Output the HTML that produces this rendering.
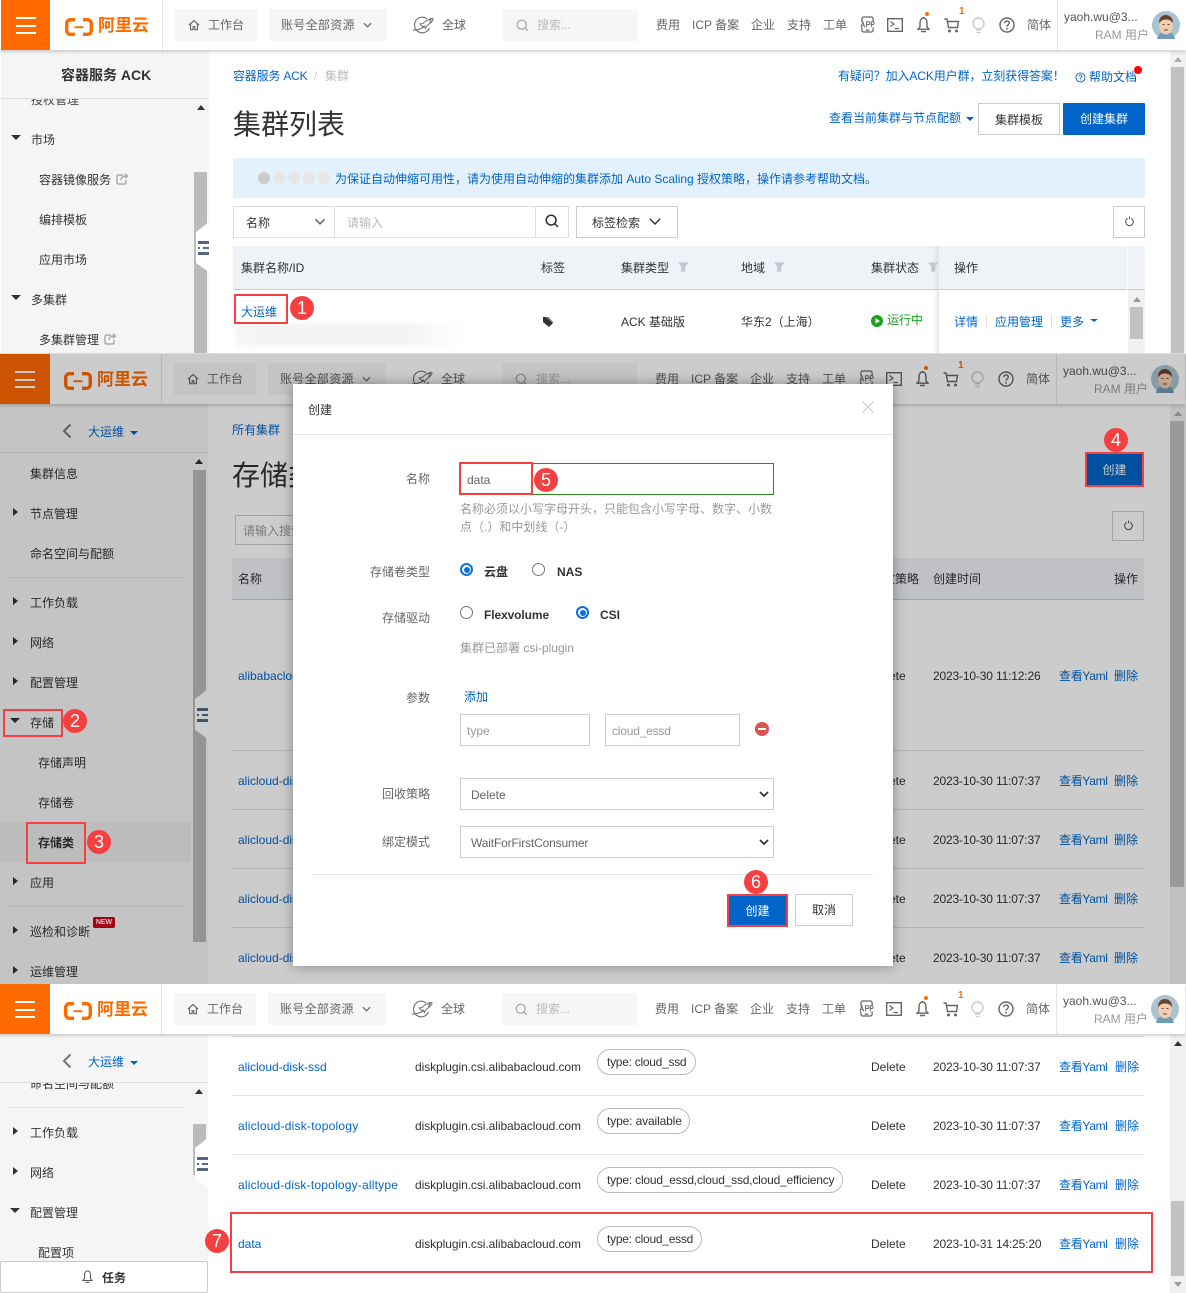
<!DOCTYPE html>
<html lang="zh-CN"><head><meta charset="utf-8"><title>容器服务 ACK</title>
<style>
*{box-sizing:border-box}
html,body{margin:0;padding:0;background:#fff}
body{position:relative;width:1186px;height:1293px;overflow:hidden;font-family:"Liberation Sans","Noto Sans CJK SC",sans-serif;font-size:12px;color:#333}
.p{position:absolute;left:0;width:1186px;overflow:hidden;background:#fff}
.w{position:absolute;left:0;width:1186px;height:1293px}
.t{position:absolute;white-space:nowrap;line-height:16px;font-size:12px}
.bl{color:#0064c8}.g{color:#666}.d{color:#999}
.r{position:absolute;display:block}
svg{position:absolute;display:block;overflow:visible}
.h{position:absolute;left:0;width:1186px;height:50px;background:#fff;box-shadow:0 1px 4px rgba(0,0,0,.25);z-index:5}
.h .t{top:17px;color:#666}
.h2{left:-1px}
.o{position:absolute;left:1px;top:0;width:49px;height:50px;background:#ff6a00}
.h2 .o{width:50px}
.o i{position:absolute;left:15px;width:20px;height:2px;background:#fff}
.box{position:absolute;top:9px;height:32px;background:#f5f6f7}
.sb{position:absolute;background:#f5f5f5}
.hl{position:absolute;height:1px;background:#e3e3e3}
.th{position:absolute;background:#eff2f6;border-bottom:1px solid #ccc}
.bd{position:absolute;border:1px solid #ccc;background:#fff}
.btn{position:absolute;text-align:center;line-height:32px;font-size:12px}
.ann{position:absolute;border:2px solid #f44040;z-index:20}
.b{position:absolute;width:24px;height:24px;border-radius:50%;background:#f44040;color:#fff;font-size:18px;line-height:24px;text-align:center;z-index:21}
.pill{position:absolute;height:26px;border:1px solid #bbb;border-radius:13px;padding-left:9px;line-height:25px;font-size:12px;white-space:nowrap;color:#333}
.rad{position:absolute;width:13px;height:13px;border-radius:50%;border:1px solid #777;background:#fff}
.rad.on{border:2px solid #0a6fe0;}
.rad.on:after{content:"";position:absolute;left:1.5px;top:1.5px;width:6px;height:6px;border-radius:50%;background:#0a6fe0}
.tri{position:absolute;width:0;height:0}
.tr{border-left:5px solid #333;border-top:4.5px solid transparent;border-bottom:4.5px solid transparent}
.td{border-top:5px solid #333;border-left:5px solid transparent;border-right:5px solid transparent}
.tu{border-bottom:5px solid #555;border-left:4px solid transparent;border-right:4px solid transparent}
.tdb{border-top:4px solid #0064c8;border-left:4px solid transparent;border-right:4px solid transparent}
.sc{position:absolute;background:#f1f1f1}
.th2{position:absolute;background:#c1c1c1}
.tm{letter-spacing:-.16px}.ya{letter-spacing:-.3px}.dp{letter-spacing:-.07px}
.res{letter-spacing:.3px}
.lo{font-size:17px!important;line-height:20px!important;font-weight:700;color:#ff6a00!important;top:16px!important}
.one{color:#ff6a00!important;font-size:10px!important;font-weight:700;top:4px!important}
</style></head><body>
<svg width="0" height="0" style="position:absolute">
<defs>
<symbol id="home" viewBox="0 0 14 14"><path d="M1 7.2 7 1.8l6 5.4M3 6v6.500h3V9h2v3.500h3V6" fill="none" stroke="#666" stroke-width="1.300"/></symbol>
<symbol id="globe" viewBox="0 0 22 20"><path d="M15 3.800A7.800 7.800 0 1 0 17.500 13" fill="none" stroke="#777" stroke-width="1.200"/><path d="M.8 15C6 15.500 13 12 17 9c3-2.200 4.500-4.500 3.800-5.200-.7-.6-3 .2-5 1.600" fill="none" stroke="#777" stroke-width="1.200"/><path d="M8 9l3-.5 3.500-3 4.500-1-1.500 4-3 2.500-1 2.500-1-2.500-2 .5z" fill="#fff" stroke="#777" stroke-width="1"/></symbol>
<symbol id="srch" viewBox="0 0 16 16"><circle cx="7" cy="7" r="5.600" fill="none" stroke="#999" stroke-width="1.300"/><path d="M11 11l3.500 3.500" stroke="#999" stroke-width="1.300"/></symbol>
<symbol id="srchd" viewBox="0 0 16 16"><circle cx="7" cy="7" r="5.600" fill="none" stroke="#333" stroke-width="1.800"/><path d="M11 11l3.800 3.800" stroke="#333" stroke-width="1.800"/></symbol>
<symbol id="app" viewBox="0 0 16 18"><path d="M2 6V3a2 2 0 0 1 2-2h8a2 2 0 0 1 2 2v3M2 12v3a2 2 0 0 0 2 2h8a2 2 0 0 0 2-2v-3M6 15h4" fill="none" stroke="#666" stroke-width="1.300"/><path d="M1 12 3 6l2 6M2 10h2M7 12V6h2a1.500 1.500 0 0 1 0 3H7M12 12V6h1.500a1.500 1.500 0 0 1 0 3H12" fill="none" stroke="#666" stroke-width="1"/></symbol>
<symbol id="term" viewBox="0 0 16 14"><rect x=".7" y=".7" width="14.600" height="12.600" fill="none" stroke="#666" stroke-width="1.400"/><path d="M3.500 3.500 7 6 3.500 8.500M7.500 10.500H12" fill="none" stroke="#666" stroke-width="1.200"/></symbol>
<symbol id="bell" viewBox="0 0 13 17"><path d="M6.500 2C4 2 3 4.500 3 7v4l-2 2.200h11L10 11V7c0-2.500-1-5-3.500-5zM6.500 1v1M4 15.500h5" fill="none" stroke="#666" stroke-width="1.400"/></symbol>
<symbol id="bella" viewBox="0 0 13 17"><path d="M6.500 2C4 2 3 4.500 3 7v4l-2 2.200h11L10 11V7c0-2.500-1-5-3.500-5zM4 15.500h5" fill="none" stroke="#555" stroke-width="1.200"/></symbol>
<symbol id="cart" viewBox="0 0 16 15"><path d="M.5 1h2.500l1.500 8.500h9l1-6H4" fill="none" stroke="#666" stroke-width="1.400"/><circle cx="5.500" cy="13" r="1.500" fill="#666"/><circle cx="12.500" cy="13" r="1.500" fill="#666"/></symbol>
<symbol id="bulb" viewBox="0 0 13 17"><circle cx="6.500" cy="6.500" r="5.500" fill="none" stroke="#ccc" stroke-width="1.400"/><path d="M4 13h5M4.500 15.500h4" stroke="#ccc" stroke-width="1.300"/></symbol>
<symbol id="help" viewBox="0 0 16 16"><circle cx="8" cy="8" r="7" fill="none" stroke="#666" stroke-width="1.400"/><path d="M5.800 6.200c0-3 4.500-3 4.500-.2 0 1.800-2.300 1.800-2.300 3.700" fill="none" stroke="#666" stroke-width="1.400"/><circle cx="8" cy="11.800" r=".9" fill="#666"/></symbol>
<symbol id="helpb" viewBox="0 0 12 12"><circle cx="6" cy="6" r="5" fill="none" stroke="#0064c8"/><path d="M4.500 4.700c0-2 3-2 3-.1C7.500 5.800 6 5.800 6 7.200M6 8.200v1" fill="none" stroke="#0064c8"/></symbol>
<symbol id="av" viewBox="0 0 28 28"><circle cx="14" cy="14" r="14" fill="#a9c3cf"/><path d="M5 28c1-6 5-7 9-7s8 1 9 7z" fill="#6f9db8"/><ellipse cx="14" cy="14.500" rx="6.800" ry="9" fill="#f3cdb0"/><path d="M7.200 12.500C6.500 6 11 3.500 14.500 4 18.800 4.500 21.500 8 20.800 12.500 19.500 9.500 17 8.500 14 8.500S9 9.500 7.200 12.500z" fill="#6a4230"/><path d="M10.500 13.500h2M15.500 13.500h2M12 19h4" stroke="#6a4230" stroke-width="1"/></symbol>
<symbol id="logo" viewBox="0 0 28 18"><path d="M10 1.700H5.500A3.800 3.800 0 0 0 1.700 5.500v7a3.800 3.800 0 0 0 3.800 3.800H10M18 1.700h4.500a3.800 3.800 0 0 1 3.800 3.800v7a3.800 3.800 0 0 1-3.800 3.800H18" fill="none" stroke="#ff6a00" stroke-width="3.400"/><path d="M9.500 9.200h9" stroke="#ff6a00" stroke-width="1.900"/></symbol>
<symbol id="chev" viewBox="0 0 10 6"><path d="M1 1l4 4 4-4" fill="none" stroke="#666" stroke-width="1.300"/></symbol>
<symbol id="chevd" viewBox="0 0 12 7"><path d="M.8.8 6 6l5.200-5.200" fill="none" stroke="#333" stroke-width="1.400"/></symbol>
<symbol id="filt" viewBox="0 0 12 10"><path d="M0 0h11.500L8 4.500V10H3.500V4.500z" fill="#c2c8cf"/></symbol>
<symbol id="ref" viewBox="0 0 12 12"><path d="M8 2.600A4.200 4.200 0 1 1 4 2.600M6 .5v3" fill="none" stroke="#555" stroke-width="1.100"/></symbol>
<symbol id="tag" viewBox="0 0 12 12"><path d="M1 1h5l5.500 5.500-4.500 4.500L1 6z" fill="#333"/><path d="M3 0l8.500 7" stroke="#fff" stroke-width=".5"/></symbol>
<symbol id="hand" viewBox="0 0 13 50"><path d="M13 0 0 10v31l13 9z" fill="#fff"/><path d="M2 19h11v3H2zM2 30h11v3H2zM7 25h6v2H7zM2 25h2v2H2z" fill="#566880"/></symbol>
<symbol id="back" viewBox="0 0 10 16"><path d="M8.500 1.500 2 8l6.500 6.500" fill="none" stroke="#777" stroke-width="2"/></symbol>
<symbol id="ext" viewBox="0 0 12 12"><path d="M7 2H2.500A1.500 1.500 0 0 0 1 3.500v6A1.500 1.500 0 0 0 2.500 11h6A1.500 1.500 0 0 0 10 9.500V7M5 7c0-3 2-4 6-4M9 .8 11.500 3 9 5.200" fill="none" stroke="#aaa" stroke-width="1.500"/></symbol>
<symbol id="play" viewBox="0 0 12 12"><circle cx="6" cy="6" r="6" fill="#1aa31a"/><path d="M4.500 3.300 9 6l-4.500 2.700z" fill="#fff"/></symbol>
</defs></svg>

<!-- PANEL 1 -->
<div class="p" style="top:0;height:354px"><div class="w" style="top:0">
<div class="h" style="top:0">
<div class="o"><i style="top:17px"></i><i style="top:25px"></i><i style="top:32px"></i></div>
<svg style="left:65px;top:18px" width="28" height="18"><use href="#logo"/></svg>
<span class="t lo" style="left:98px">阿里云</span>
<div class="r" style="left:162px;top:0;width:1px;height:50px;background:#e5e5e5"></div>
<div class="box" style="left:175px;width:82px"></div>
<svg style="left:188px;top:19px" width="12" height="12"><use href="#home"/></svg><span class="t" style="left:208px">工作台</span>
<div class="box" style="left:269px;width:118px"></div><span class="t res" style="left:281px">账号全部资源</span>
<svg style="left:363px;top:22px" width="9" height="6"><use href="#chev"/></svg>
<svg style="left:412px;top:15px" width="22" height="20"><use href="#globe"/></svg><span class="t" style="left:442px">全球</span>
<div class="box" style="left:503px;width:135px"></div>
<svg style="left:516px;top:19px" width="13" height="13"><use href="#srch"/></svg><span class="t" style="left:537px;color:#bbb">搜索...</span>
<span class="t" style="left:656px">费用</span><span class="t" style="left:692px">ICP 备案</span><span class="t" style="left:751px">企业</span><span class="t" style="left:787px">支持</span><span class="t" style="left:823px">工单</span>
<svg style="left:860px;top:16px" width="15" height="17"><use href="#app"/></svg>
<svg style="left:887px;top:18px" width="16" height="14"><use href="#term"/></svg>
<svg style="left:917px;top:16px" width="13" height="17"><use href="#bell"/></svg><div class="r" style="left:925px;top:12px;width:4px;height:4px;border-radius:50%;background:#ff6a00"></div>
<svg style="left:944px;top:18px" width="16" height="15"><use href="#cart"/></svg><span class="t one" style="left:959px">1</span>
<svg style="left:972px;top:17px" width="13" height="17"><use href="#bulb"/></svg>
<svg style="left:999px;top:17px" width="16" height="16"><use href="#help"/></svg>
<span class="t" style="left:1027px">简体</span>
<div class="r" style="left:1057px;top:0;width:1px;height:50px;background:#e5e5e5"></div>
<span class="t" style="left:1064px;top:9px;color:#555">yaoh.wu@3...</span><span class="t" style="left:1095px;top:27px;color:#999">RAM 用户</span>
<svg style="left:1152px;top:11px" width="28" height="28"><use href="#av"/></svg>
</div>
<div class="sb" style="left:1px;top:50px;width:208px;height:304px"></div>
<span class="t" style="left:61px;top:67px;font-weight:700;font-size:14px;line-height:16px">容器服务 ACK</span>
<span class="t" style="left:31px;top:92px;color:#444;clip-path:inset(7px 0 0 0)">授权管理</span>
<div class="r" style="left:1px;top:98px;width:208px;height:1px;background:#ddd"></div>
<span class="t" style="left:31px;top:132px">市场</span><div class="tri td" style="left:11px;top:135px"></div>
<span class="t" style="left:39px;top:172px">容器镜像服务</span><svg style="left:116px;top:173px" width="12" height="12"><use href="#ext"/></svg>
<span class="t" style="left:39px;top:212px">编排模板</span>
<span class="t" style="left:39px;top:252px">应用市场</span>
<span class="t" style="left:31px;top:292px">多集群</span><div class="tri td" style="left:11px;top:295px"></div>
<span class="t" style="left:39px;top:332px">多集群管理</span><svg style="left:104px;top:333px" width="12" height="12"><use href="#ext"/></svg>
<div class="tri tu" style="left:197px;top:105px;border-bottom-color:#333"></div>
<div class="th2" style="left:194px;top:172px;width:13px;height:182px;background:#bbb"></div>
<svg style="left:196px;top:222px" width="13" height="50"><use href="#hand"/></svg>

<span class="t bl" style="left:233px;top:68px;letter-spacing:-.2px">容器服务 ACK</span><span class="t" style="left:314px;top:68px;color:#ccc">/</span><span class="t" style="left:325px;top:68px;color:#bbb">集群</span>
<span class="t" style="left:233px;top:105px;font-size:28px;line-height:40px;color:#333">集群列表</span>
<span class="t bl" style="left:838px;top:68px;letter-spacing:-.1px">有疑问？加入ACK用户群，立刻获得答案！</span>
<svg style="left:1075px;top:72px" width="11" height="11"><use href="#helpb"/></svg><span class="t bl" style="left:1089px;top:69px">帮助文档</span>
<div class="r" style="left:1134px;top:66px;width:8px;height:8px;border-radius:50%;background:#f00"></div>
<span class="t bl" style="left:829px;top:110px">查看当前集群与节点配额</span><div class="tri tdb" style="left:966px;top:117px"></div>
<div class="btn bd" style="left:978px;top:103px;width:82px;height:32px;line-height:32px">集群模板</div>
<div class="btn" style="left:1063px;top:103px;width:82px;height:32px;line-height:33px;background:#0064c8;color:#fff;border-radius:1px">创建集群</div>
<div class="r" style="left:233px;top:158px;width:912px;height:40px;background:#e3f1fd"></div>
<div class="r" style="left:258px;top:172px;width:12px;height:12px;border-radius:50%;background:#ccc"></div>
<div class="r" style="left:273px;top:172px;width:12px;height:12px;border-radius:50%;background:#e6e6e6"></div>
<div class="r" style="left:288px;top:172px;width:12px;height:12px;border-radius:50%;background:#e6e6e6"></div>
<div class="r" style="left:303px;top:172px;width:12px;height:12px;border-radius:50%;background:#e6e6e6"></div>
<div class="r" style="left:318px;top:172px;width:12px;height:12px;border-radius:50%;background:#e6e6e6"></div>
<span class="t bl" style="left:335px;top:171px">为保证自动伸缩可用性，请为使用自动伸缩的集群添加 Auto Scaling 授权策略，操作请参考帮助文档。</span>
<div class="bd" style="left:233px;top:206px;width:336px;height:32px;border-color:#ddd"></div>
<div class="r" style="left:334px;top:206px;width:1px;height:32px;background:#ddd"></div><div class="r" style="left:535px;top:206px;width:1px;height:32px;background:#ddd"></div>
<span class="t" style="left:246px;top:215px">名称</span><svg style="left:314px;top:218px" width="12" height="7"><use href="#chev"/></svg>
<span class="t" style="left:347px;top:215px;color:#bbb">请输入</span>
<svg style="left:545px;top:214px" width="14" height="14"><use href="#srchd"/></svg>
<div class="bd" style="left:576px;top:206px;width:102px;height:32px"></div><span class="t" style="left:592px;top:215px">标签检索</span><svg style="left:649px;top:218px" width="12" height="7"><use href="#chevd"/></svg>
<div class="bd" style="left:1113px;top:206px;width:32px;height:32px"></div><svg style="left:1124px;top:216px" width="11" height="11"><use href="#ref"/></svg>
<div class="th" style="left:233px;top:246px;width:912px;height:44px"></div>
<div class="r" style="left:1127px;top:246px;width:1px;height:44px;background:#fff"></div>
<div class="r" style="left:932px;top:246px;width:6px;height:108px;background:linear-gradient(90deg,rgba(0,0,0,0),rgba(0,0,0,.06))"></div>
<span class="t" style="left:241px;top:260px">集群名称/ID</span><span class="t" style="left:541px;top:260px">标签</span>
<span class="t" style="left:621px;top:260px">集群类型</span><svg style="left:678px;top:262px" width="11" height="10"><use href="#filt"/></svg>
<span class="t" style="left:741px;top:260px">地域</span><svg style="left:774px;top:262px" width="11" height="10"><use href="#filt"/></svg>
<span class="t" style="left:871px;top:260px">集群状态</span><svg style="left:928px;top:262px" width="11" height="10"><use href="#filt"/></svg>
<div class="r" style="left:938px;top:246px;width:1px;height:108px;background:#e5e5e5"></div>
<span class="t" style="left:954px;top:260px">操作</span>
<span class="t bl" style="left:241px;top:304px">大运维</span>
<div class="r" style="left:236px;top:323px;width:230px;height:23px;background:linear-gradient(90deg,#f5f5f5,#f2f2f2 70%,#fff);filter:blur(2px)"></div>
<svg style="left:542px;top:316px" width="12" height="12"><use href="#tag"/></svg>
<span class="t" style="left:621px;top:314px">ACK 基础版</span><span class="t" style="left:741px;top:314px">华东2（上海）</span>
<svg style="left:871px;top:315px" width="12" height="12"><use href="#play"/></svg><span class="t" style="left:887px;top:312px;color:#1aa31a">运行中</span>
<span class="t bl" style="left:954px;top:314px">详情</span><div class="r" style="left:986px;top:315px;width:1px;height:12px;background:#ddd"></div>
<span class="t bl" style="left:995px;top:314px">应用管理</span><div class="r" style="left:1051px;top:315px;width:1px;height:12px;background:#ddd"></div>
<span class="t bl" style="left:1060px;top:314px">更多</span><div class="tri tdb" style="left:1090px;top:319px;border-top-width:3px"></div>
<div class="sc" style="left:1128px;top:290px;width:17px;height:64px"></div><div class="tri tu" style="left:1133px;top:297px;border-bottom-color:#999"></div><div class="th2" style="left:1130px;top:307px;width:13px;height:32px"></div>
<div class="sc" style="left:1170px;top:51px;width:16px;height:303px"></div><div class="tri tu" style="left:1174px;top:57px;border-bottom-color:#aaa"></div><div class="th2" style="left:1171px;top:67px;width:13px;height:287px"></div>
</div></div>
<div class="r" style="left:0;top:353px;width:1186px;height:1px;background:#ddd;z-index:6"></div>

<!-- PANEL 2 -->
<div class="p" style="top:354px;height:630px;z-index:7"><div class="w" style="top:-354px">
<div class="h h2" style="top:354px">
<div class="o"><i style="top:17px"></i><i style="top:25px"></i><i style="top:32px"></i></div>
<svg style="left:65px;top:18px" width="28" height="18"><use href="#logo"/></svg>
<span class="t lo" style="left:98px">阿里云</span>
<div class="r" style="left:162px;top:0;width:1px;height:50px;background:#e5e5e5"></div>
<div class="box" style="left:175px;width:82px"></div>
<svg style="left:188px;top:19px" width="12" height="12"><use href="#home"/></svg><span class="t" style="left:208px">工作台</span>
<div class="box" style="left:269px;width:118px"></div><span class="t res" style="left:281px">账号全部资源</span>
<svg style="left:363px;top:22px" width="9" height="6"><use href="#chev"/></svg>
<svg style="left:412px;top:15px" width="22" height="20"><use href="#globe"/></svg><span class="t" style="left:442px">全球</span>
<div class="box" style="left:503px;width:135px"></div>
<svg style="left:516px;top:19px" width="13" height="13"><use href="#srch"/></svg><span class="t" style="left:537px;color:#bbb">搜索...</span>
<span class="t" style="left:656px">费用</span><span class="t" style="left:692px">ICP 备案</span><span class="t" style="left:751px">企业</span><span class="t" style="left:787px">支持</span><span class="t" style="left:823px">工单</span>
<svg style="left:860px;top:16px" width="15" height="17"><use href="#app"/></svg>
<svg style="left:887px;top:18px" width="16" height="14"><use href="#term"/></svg>
<svg style="left:917px;top:16px" width="13" height="17"><use href="#bell"/></svg><div class="r" style="left:925px;top:12px;width:4px;height:4px;border-radius:50%;background:#ff6a00"></div>
<svg style="left:944px;top:18px" width="16" height="15"><use href="#cart"/></svg><span class="t one" style="left:959px">1</span>
<svg style="left:972px;top:17px" width="13" height="17"><use href="#bulb"/></svg>
<svg style="left:999px;top:17px" width="16" height="16"><use href="#help"/></svg>
<span class="t" style="left:1027px">简体</span>
<div class="r" style="left:1057px;top:0;width:1px;height:50px;background:#e5e5e5"></div>
<span class="t" style="left:1064px;top:9px;color:#555">yaoh.wu@3...</span><span class="t" style="left:1095px;top:27px;color:#999">RAM 用户</span>
<svg style="left:1152px;top:11px" width="28" height="28"><use href="#av"/></svg>
</div>
<div class="sb" style="left:0;top:404px;width:208px;height:580px"></div>
<svg style="left:62px;top:423px" width="10" height="16"><use href="#back"/></svg>
<span class="t bl" style="left:88px;top:424px">大运维</span><div class="tri tdb" style="left:130px;top:431px"></div>
<div class="r" style="left:0;top:452px;width:208px;height:1px;background:#ddd"></div>
<span class="t" style="left:30px;top:466px">集群信息</span>
<span class="t" style="left:30px;top:506px">节点管理</span><div class="tri tr" style="left:13px;top:508px"></div>
<span class="t" style="left:30px;top:546px">命名空间与配额</span>
<div class="hl" style="left:7px;top:577px;width:178px"></div>
<span class="t" style="left:30px;top:595px">工作负载</span><div class="tri tr" style="left:13px;top:597px"></div>
<span class="t" style="left:30px;top:635px">网络</span><div class="tri tr" style="left:13px;top:637px"></div>
<span class="t" style="left:30px;top:675px">配置管理</span><div class="tri tr" style="left:13px;top:677px"></div>
<span class="t" style="left:30px;top:715px">存储</span><div class="tri td" style="left:10px;top:718px"></div>
<span class="t" style="left:38px;top:755px">存储声明</span>
<span class="t" style="left:38px;top:795px">存储卷</span>
<div class="r" style="left:0;top:822px;width:191px;height:40px;background:#ebebeb"></div>
<span class="t" style="left:38px;top:835px;font-weight:700">存储类</span>
<span class="t" style="left:30px;top:875px">应用</span><div class="tri tr" style="left:13px;top:877px"></div>
<div class="hl" style="left:7px;top:906px;width:178px"></div>
<span class="t" style="left:30px;top:924px">巡检和诊断</span><div class="tri tr" style="left:13px;top:926px"></div>
<div class="r" style="left:93px;top:917px;width:22px;height:11px;background:#d0021b;border-radius:2px;color:#fff;font-size:7px;font-weight:700;line-height:11px;text-align:center">NEW</div>
<span class="t" style="left:30px;top:964px">运维管理</span><div class="tri tr" style="left:13px;top:966px"></div>
<div class="tri tu" style="left:195px;top:459px;border-bottom-color:#333"></div>
<div class="th2" style="left:193px;top:470px;width:13px;height:472px;background:#bbb"></div>
<svg style="left:195px;top:689px" width="13" height="50"><use href="#hand"/></svg>

<span class="t bl" style="left:232px;top:422px">所有集群</span>
<span class="t" style="left:232px;top:456px;font-size:28px;line-height:40px">存储类</span>
<div class="bd" style="left:235px;top:515px;width:200px;height:30px"></div><span class="t" style="left:243px;top:523px;color:#999">请输入搜索</span>
<div class="btn" style="left:1085px;top:452px;width:59px;height:35px;line-height:37px;background:#0064c8;color:#fff">创建</div>
<div class="bd" style="left:1112px;top:511px;width:32px;height:30px"></div><svg style="left:1123px;top:520px" width="11" height="11"><use href="#ref"/></svg>
<div class="th" style="left:232px;top:558px;width:912px;height:42px"></div>
<span class="t" style="left:238px;top:571px">名称</span><span class="t" style="left:871px;top:571px">回收策略</span><span class="t" style="left:933px;top:571px">创建时间</span><span class="t" style="left:1114px;top:571px">操作</span>
<div class="hl" style="left:232px;top:750px;width:912px"></div><div class="hl" style="left:232px;top:809px;width:912px"></div><div class="hl" style="left:232px;top:868px;width:912px"></div><div class="hl" style="left:232px;top:927px;width:912px"></div>
<span class="t bl" style="left:238px;top:668px">alibabacloud-disk</span><span class="t" style="left:871px;top:668px">Delete</span><span class="t tm" style="left:933px;top:668px">2023-10-30 11:12:26</span><span class="t bl ya" style="left:1059px;top:668px">查看Yaml</span><span class="t bl" style="left:1114px;top:668px">删除</span>
<span class="t bl" style="left:238px;top:773px">alicloud-disk</span><span class="t" style="left:871px;top:773px">Delete</span><span class="t tm" style="left:933px;top:773px">2023-10-30 11:07:37</span><span class="t bl ya" style="left:1059px;top:773px">查看Yaml</span><span class="t bl" style="left:1114px;top:773px">删除</span>
<span class="t bl" style="left:238px;top:832px">alicloud-disk</span><span class="t" style="left:871px;top:832px">Delete</span><span class="t tm" style="left:933px;top:832px">2023-10-30 11:07:37</span><span class="t bl ya" style="left:1059px;top:832px">查看Yaml</span><span class="t bl" style="left:1114px;top:832px">删除</span>
<span class="t bl" style="left:238px;top:891px">alicloud-disk</span><span class="t" style="left:871px;top:891px">Delete</span><span class="t tm" style="left:933px;top:891px">2023-10-30 11:07:37</span><span class="t bl ya" style="left:1059px;top:891px">查看Yaml</span><span class="t bl" style="left:1114px;top:891px">删除</span>
<span class="t bl" style="left:238px;top:950px">alicloud-disk</span><span class="t" style="left:871px;top:950px">Delete</span><span class="t tm" style="left:933px;top:950px">2023-10-30 11:07:37</span><span class="t bl ya" style="left:1059px;top:950px">查看Yaml</span><span class="t bl" style="left:1114px;top:950px">删除</span>
<div class="sc" style="left:1170px;top:405px;width:16px;height:579px"></div><div class="tri tu" style="left:1174px;top:411px;border-bottom-color:#aaa"></div><div class="th2" style="left:1170px;top:421px;width:14px;height:466px"></div>

<!-- dim overlay -->
<div class="r" style="left:0;top:354px;width:1186px;height:630px;background:rgba(0,0,0,.2);z-index:8"></div>

<!-- modal -->
<div class="r" style="left:293px;top:384px;width:600px;height:582px;background:#fff;box-shadow:0 0 12px rgba(0,0,0,.35);z-index:9"></div>
<div class="r" style="left:0;top:0;width:1186px;height:1293px;z-index:10">
<span class="t" style="left:308px;top:402px">创建</span>
<svg style="left:862px;top:401px" width="12" height="12"><path d="M.5.500l11 11M11.500.500l-11 11" stroke="#ccc" stroke-width="1.200"/></svg>
<div class="hl" style="left:293px;top:434px;width:600px"></div>
<span class="t g" style="left:406px;top:471px">名称</span>
<div class="r" style="left:460px;top:463px;width:314px;height:32px;border:1px solid #2d8a1e"></div><span class="t g" style="left:467px;top:472px">data</span>
<span class="t d" style="left:460px;top:501px">名称必须以小写字母开头，只能包含小写字母、数字、小数</span>
<span class="t d" style="left:460px;top:519px">点（.）和中划线（-）</span>
<span class="t g" style="left:370px;top:564px">存储卷类型</span>
<div class="rad on" style="left:460px;top:563px"></div><span class="t" style="left:484px;top:564px;font-weight:700">云盘</span>
<div class="rad" style="left:532px;top:563px"></div><span class="t" style="left:557px;top:564px;font-weight:700">NAS</span>
<span class="t g" style="left:382px;top:610px">存储驱动</span>
<div class="rad" style="left:460px;top:606px"></div><span class="t" style="left:484px;top:607px;font-weight:700;letter-spacing:-.1px">Flexvolume</span>
<div class="rad on" style="left:576px;top:606px"></div><span class="t" style="left:600px;top:607px;font-weight:700">CSI</span>
<span class="t d" style="left:460px;top:640px">集群已部署 csi-plugin</span>
<span class="t g" style="left:406px;top:690px">参数</span><span class="t bl" style="left:464px;top:689px">添加</span>
<div class="bd" style="left:460px;top:714px;width:130px;height:32px"></div><span class="t d" style="left:467px;top:723px">type</span>
<div class="bd" style="left:605px;top:714px;width:135px;height:32px"></div><span class="t d" style="left:612px;top:723px;letter-spacing:-.2px">cloud_essd</span>
<div class="r" style="left:755px;top:722px;width:14px;height:14px;border-radius:50%;background:#d9534f"></div><div class="r" style="left:758px;top:728px;width:8px;height:2px;background:#fff"></div>
<span class="t g" style="left:382px;top:786px">回收策略</span>
<div class="bd" style="left:460px;top:778px;width:314px;height:32px"></div><span class="t g" style="left:471px;top:787px">Delete</span><svg style="left:759px;top:791px" width="10" height="6"><path d="M1 1l4 4 4-4" fill="none" stroke="#333" stroke-width="1.800"/></svg>
<span class="t g" style="left:382px;top:834px">绑定模式</span>
<div class="bd" style="left:460px;top:826px;width:314px;height:32px"></div><span class="t g" style="left:471px;top:835px;letter-spacing:-.15px">WaitForFirstConsumer</span><svg style="left:759px;top:839px" width="10" height="6"><path d="M1 1l4 4 4-4" fill="none" stroke="#333" stroke-width="1.800"/></svg>
<div class="hl" style="left:313px;top:874px;width:560px"></div>
<div class="btn" style="left:729px;top:896px;width:57px;height:29px;line-height:30px;background:#0064c8;color:#fff">创建</div>
<div class="btn bd" style="left:795px;top:894px;width:58px;height:32px;line-height:30px">取消</div>
</div>
</div></div>

<!-- PANEL 3 -->
<div class="p" style="top:984px;height:309px;z-index:7"><div class="w" style="top:-984px">
<div class="r" style="left:208px;top:1034px;width:962px;height:259px;background:#fff"></div>
<div class="r" style="left:232px;top:1036px;width:912px;height:1px;background:#ddd"></div>
<span class="t bl" style="left:238px;top:1059px">alicloud-disk-ssd</span><span class="t dp" style="left:415px;top:1059px">diskplugin.csi.alibabacloud.com</span><div class="pill" style="left:597px;top:1049px;width:99px;letter-spacing:-.27px">type: cloud_ssd</div><span class="t" style="left:871px;top:1059px">Delete</span><span class="t tm" style="left:933px;top:1059px">2023-10-30 11:07:37</span><span class="t bl ya" style="left:1059px;top:1059px">查看Yaml</span><span class="t bl" style="left:1115px;top:1059px">删除</span>
<div class="hl" style="left:232px;top:1095px;width:912px"></div>
<span class="t bl" style="left:238px;top:1118px;letter-spacing:.23px">alicloud-disk-topology</span><span class="t dp" style="left:415px;top:1118px">diskplugin.csi.alibabacloud.com</span><div class="pill" style="left:597px;top:1108px;width:93px;letter-spacing:-.13px">type: available</div><span class="t" style="left:871px;top:1118px">Delete</span><span class="t tm" style="left:933px;top:1118px">2023-10-30 11:07:37</span><span class="t bl ya" style="left:1059px;top:1118px">查看Yaml</span><span class="t bl" style="left:1115px;top:1118px">删除</span>
<div class="hl" style="left:232px;top:1154px;width:912px"></div>
<span class="t bl" style="left:238px;top:1177px;letter-spacing:.2px">alicloud-disk-topology-alltype</span><span class="t dp" style="left:415px;top:1177px">diskplugin.csi.alibabacloud.com</span><div class="pill" style="left:597px;top:1167px;width:246px;letter-spacing:-.2px">type: cloud_essd,cloud_ssd,cloud_efficiency</div><span class="t" style="left:871px;top:1177px">Delete</span><span class="t tm" style="left:933px;top:1177px">2023-10-30 11:07:37</span><span class="t bl ya" style="left:1059px;top:1177px">查看Yaml</span><span class="t bl" style="left:1115px;top:1177px">删除</span>
<span class="t bl" style="left:238px;top:1236px">data</span><span class="t dp" style="left:415px;top:1236px">diskplugin.csi.alibabacloud.com</span><div class="pill" style="left:597px;top:1226px;width:105px;letter-spacing:-.25px">type: cloud_essd</div><span class="t" style="left:871px;top:1236px">Delete</span><span class="t tm" style="left:933px;top:1236px">2023-10-31 14:25:20</span><span class="t bl ya" style="left:1059px;top:1236px">查看Yaml</span><span class="t bl" style="left:1115px;top:1236px">删除</span>
<div class="h h2" style="top:984px">
<div class="o"><i style="top:17px"></i><i style="top:25px"></i><i style="top:32px"></i></div>
<svg style="left:65px;top:18px" width="28" height="18"><use href="#logo"/></svg>
<span class="t lo" style="left:98px">阿里云</span>
<div class="r" style="left:162px;top:0;width:1px;height:50px;background:#e5e5e5"></div>
<div class="box" style="left:175px;width:82px"></div>
<svg style="left:188px;top:19px" width="12" height="12"><use href="#home"/></svg><span class="t" style="left:208px">工作台</span>
<div class="box" style="left:269px;width:118px"></div><span class="t res" style="left:281px">账号全部资源</span>
<svg style="left:363px;top:22px" width="9" height="6"><use href="#chev"/></svg>
<svg style="left:412px;top:15px" width="22" height="20"><use href="#globe"/></svg><span class="t" style="left:442px">全球</span>
<div class="box" style="left:503px;width:135px"></div>
<svg style="left:516px;top:19px" width="13" height="13"><use href="#srch"/></svg><span class="t" style="left:537px;color:#bbb">搜索...</span>
<span class="t" style="left:656px">费用</span><span class="t" style="left:692px">ICP 备案</span><span class="t" style="left:751px">企业</span><span class="t" style="left:787px">支持</span><span class="t" style="left:823px">工单</span>
<svg style="left:860px;top:16px" width="15" height="17"><use href="#app"/></svg>
<svg style="left:887px;top:18px" width="16" height="14"><use href="#term"/></svg>
<svg style="left:917px;top:16px" width="13" height="17"><use href="#bell"/></svg><div class="r" style="left:925px;top:12px;width:4px;height:4px;border-radius:50%;background:#ff6a00"></div>
<svg style="left:944px;top:18px" width="16" height="15"><use href="#cart"/></svg><span class="t one" style="left:959px">1</span>
<svg style="left:972px;top:17px" width="13" height="17"><use href="#bulb"/></svg>
<svg style="left:999px;top:17px" width="16" height="16"><use href="#help"/></svg>
<span class="t" style="left:1027px">简体</span>
<div class="r" style="left:1057px;top:0;width:1px;height:50px;background:#e5e5e5"></div>
<span class="t" style="left:1064px;top:9px;color:#555">yaoh.wu@3...</span><span class="t" style="left:1095px;top:27px;color:#999">RAM 用户</span>
<svg style="left:1152px;top:11px" width="28" height="28"><use href="#av"/></svg>
</div>
<div class="sb" style="left:0;top:1034px;width:208px;height:259px"></div>
<span class="t" style="left:30px;top:1076px">命名空间与配额</span>
<div class="sb" style="left:0;top:1034px;width:208px;height:48px"></div>
<svg style="left:62px;top:1053px" width="10" height="16"><use href="#back"/></svg>
<span class="t bl" style="left:88px;top:1054px">大运维</span><div class="tri tdb" style="left:130px;top:1061px"></div>
<div class="r" style="left:0;top:1082px;width:208px;height:1px;background:#ddd"></div>
<div class="hl" style="left:7px;top:1107px;width:178px"></div>
<span class="t" style="left:30px;top:1125px">工作负载</span><div class="tri tr" style="left:13px;top:1127px"></div>
<span class="t" style="left:30px;top:1165px">网络</span><div class="tri tr" style="left:13px;top:1167px"></div>
<span class="t" style="left:30px;top:1205px">配置管理</span><div class="tri td" style="left:10px;top:1208px"></div>
<span class="t" style="left:38px;top:1245px">配置项</span>
<div class="tri tu" style="left:195px;top:1089px;border-bottom-color:#333"></div>
<div class="th2" style="left:193px;top:1124px;width:13px;height:51px;background:#bbb"></div>
<svg style="left:195px;top:1138px" width="13" height="50"><use href="#hand"/></svg>
<div class="bd" style="left:0;top:1261px;width:208px;height:32px;border-radius:2px;background:#fff"></div>
<svg style="left:82px;top:1269px" width="11" height="15"><use href="#bella"/></svg><span class="t" style="left:102px;top:1270px;font-weight:700">任务</span>
<div class="sc" style="left:1170px;top:1034px;width:16px;height:259px"></div><div class="tri tu" style="left:1174px;top:1041px;border-bottom-color:#333"></div>
<div class="th2" style="left:1171px;top:1201px;width:13px;height:75px"></div><div class="tri" style="left:1174px;top:1282px;border-top:5px solid #999;border-left:4px solid transparent;border-right:4px solid transparent"></div>
</div></div>

<!-- annotations -->
<div class="ann" style="left:234px;top:294px;width:54px;height:30px"></div><div class="b" style="left:290px;top:296px">1</div>
<div class="ann" style="left:3px;top:709px;width:60px;height:28px"></div><div class="b" style="left:63px;top:709px">2</div>
<div class="ann" style="left:26px;top:822px;width:60px;height:42px"></div><div class="b" style="left:87px;top:830px">3</div>
<div class="ann" style="left:1085px;top:452px;width:59px;height:35px"></div><div class="b" style="left:1104px;top:428px">4</div>
<div class="ann" style="left:459px;top:462px;width:74px;height:33px"></div><div class="b" style="left:534px;top:468px">5</div>
<div class="ann" style="left:727px;top:894px;width:61px;height:33px"></div><div class="b" style="left:744px;top:870px">6</div>
<div class="ann" style="left:230px;top:1212px;width:923px;height:61px"></div><div class="b" style="left:205px;top:1229px">7</div>
</body></html>
